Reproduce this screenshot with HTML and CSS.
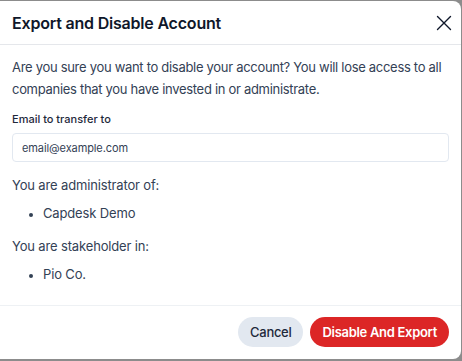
FILE: index.html
```html
<!DOCTYPE html>
<html lang="en">
<head>
    <meta charset="UTF-8">
    <meta name="viewport" content="width=device-width, initial-scale=1.0">
    <title>Export and Disable Account</title>
    <link rel="stylesheet" href="styles.css">
</head>
<body>
    <div class="modal">
        <div class="modal-header">
            <h2>Export and Disable Account</h2>
            <button class="close-btn" aria-label="Close">
                <svg width="16" height="16" viewBox="0 0 16 16" fill="none" stroke="#0f172a" stroke-width="1.4" stroke-linecap="round">
                    <path d="M1.5 1.5L14.5 14.5M14.5 1.5L1.5 14.5"/>
                </svg>
            </button>
        </div>
        <div class="modal-body">
            <p class="warning">Are you sure you want to disable your account? You will lose access to all companies that you have invested in or administrate.</p>
            <label for="email">Email to transfer to</label>
            <input id="email" type="email" placeholder="email@example.com">
            <p class="section">You are administrator of:</p>
            <ul>
                <li>Capdesk Demo</li>
            </ul>
            <p class="section">You are stakeholder in:</p>
            <ul>
                <li>Pio Co.</li>
            </ul>
        </div>
        <div class="modal-footer">
            <button class="btn btn-cancel">Cancel</button>
            <button class="btn btn-danger">Disable And Export</button>
        </div>
    </div>
</body>
</html>
```

FILE: styles.css
```css
body {
    margin: 0;
    padding: 1px 1px 2px 0;
    background-color: #8c8c8c;
    font-family: Inter, "Noto Sans", sans-serif;
    color: #334155;
}
.modal {
    background-color: #fff;
    border-radius: 8px;
    margin-left: -8px;
    padding-left: 8px;
    height: 358px;
    display: flex;
    flex-direction: column;
}
.modal-header {
    display: flex;
    align-items: center;
    justify-content: space-between;
    height: 43px;
    padding: 0 12px;
    border-bottom: 1px solid #e5e7eb;
}
.modal-header h2 {
    margin: 0;
    font-size: 16px;
    font-weight: 600;
    letter-spacing: -0.2px;
    color: #0f172a;
}
.close-btn {
    border: none;
    background: none;
    padding: 0;
    margin-right: -3px;
    display: flex;
    cursor: pointer;
}
.modal-body {
    flex: 1;
    padding: 11px 12px 0;
}
.warning {
    margin: 0 0 12px;
    font-size: 13px;
    letter-spacing: -0.3px;
    line-height: 22px;
}
label {
    display: block;
    font-size: 11px;
    font-weight: 500;
    color: #1e293b;
    margin-bottom: 7px;
}
input {
    box-sizing: border-box;
    width: 100%;
    height: 29px;
    border: 1px solid #e2e8f0;
    border-radius: 4px;
    padding: 0 9px;
    font-family: inherit;
    font-size: 11px;
    letter-spacing: -0.1px;
    color: #334155;
}
input::placeholder {
    color: #334155;
}
.section {
    margin: 13px 0 0;
    font-size: 13px;
    letter-spacing: -0.15px;
    line-height: 20px;
}
ul {
    margin: 8px 0 0;
    padding-left: 31px;
    font-size: 13px;
    letter-spacing: -0.15px;
    line-height: 20px;
}
li::marker {
    font-size: 11px;
}
.modal-footer {
    display: flex;
    justify-content: flex-end;
    gap: 7px;
    padding: 11px 12px 12px;
    border-top: 1px solid #eef1f4;
}
.btn {
    height: 30px;
    border: none;
    border-radius: 15px;
    font-family: inherit;
    font-size: 13px;
    letter-spacing: -0.3px;
    cursor: pointer;
}
.btn-cancel {
    background-color: #e2e8f0;
    color: #1e293b;
    font-weight: 500;
    padding: 0 12px;
}
.btn-danger {
    background-color: #dc2626;
    color: #fff;
    font-weight: 600;
    padding: 0 12px;
}
```
